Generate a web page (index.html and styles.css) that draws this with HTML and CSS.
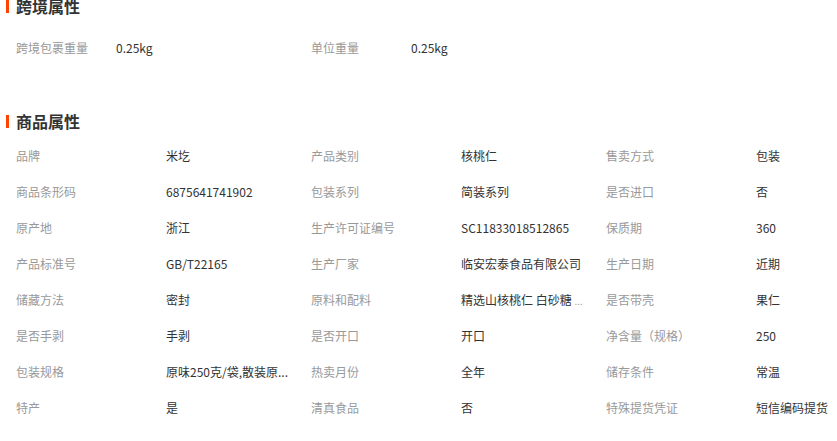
FILE: index.html
```html
<!DOCTYPE html>
<html lang="zh-CN">
<head>
  <meta charset="UTF-8" />
  <title>商品属性</title>
  <link rel="stylesheet" href="styles.css">
</head>
<body>
  <div class="section cross">
    <h3 class="title"><span class="bar"></span>跨境属性</h3>
    <ul class="attrs attrs-short">
      <li><span class="label">跨境包裹重量</span><span class="value">0.25kg</span></li>
      <li><span class="label">单位重量</span><span class="value">0.25kg</span></li>
    </ul>
  </div>

  <div class="section goods">
    <h3 class="title"><span class="bar"></span>商品属性</h3>
    <ul class="attrs">
      <li><span class="label">品牌</span><span class="value">米圪</span></li>
      <li><span class="label">产品类别</span><span class="value">核桃仁</span></li>
      <li><span class="label">售卖方式</span><span class="value">包装</span></li>
      <li><span class="label">商品条形码</span><span class="value">6875641741902</span></li>
      <li><span class="label">包装系列</span><span class="value">简装系列</span></li>
      <li><span class="label">是否进口</span><span class="value">否</span></li>
      <li><span class="label">原产地</span><span class="value">浙江</span></li>
      <li><span class="label">生产许可证编号</span><span class="value">SC11833018512865</span></li>
      <li><span class="label">保质期</span><span class="value">360</span></li>
      <li><span class="label">产品标准号</span><span class="value">GB/T22165</span></li>
      <li><span class="label">生产厂家</span><span class="value">临安宏泰食品有限公司</span></li>
      <li><span class="label">生产日期</span><span class="value">近期</span></li>
      <li><span class="label">储藏方法</span><span class="value">密封</span></li>
      <li><span class="label">原料和配料</span><span class="value">精选山核桃仁 白砂糖 <span class="more">...</span></span></li>
      <li><span class="label">是否带壳</span><span class="value">果仁</span></li>
      <li><span class="label">是否手剥</span><span class="value">手剥</span></li>
      <li><span class="label">是否开口</span><span class="value">开口</span></li>
      <li><span class="label">净含量（规格）</span><span class="value">250</span></li>
      <li><span class="label">包装规格</span><span class="value">原味250克/袋,散装原...</span></li>
      <li><span class="label">热卖月份</span><span class="value">全年</span></li>
      <li><span class="label">储存条件</span><span class="value">常温</span></li>
      <li><span class="label">特产</span><span class="value">是</span></li>
      <li><span class="label">清真食品</span><span class="value">否</span></li>
      <li><span class="label">特殊提货凭证</span><span class="value">短信编码提货</span></li>
    </ul>
  </div>
</body>
</html>
```

FILE: styles.css
```css
body {
  margin: 0;
  padding: 0;
  background: #fff;
  font-family: "Noto Sans CJK SC", "Liberation Sans", sans-serif;
  font-size: 12px;
  color: #333;
  overflow: hidden;
}
.section {
  width: 837px;
}
.cross {
  margin-top: -4px;
}
.goods {
  margin-top: 45px;
}
.title {
  display: flex;
  align-items: center;
  gap: 7px;
  margin: 0 0 0 6px;
  height: 20px;
  line-height: 20px;
  font-size: 16px;
  font-weight: bold;
  color: #333;
}
.bar {
  width: 3px;
  height: 13px;
  background: #ff4400;
}
.attrs {
  list-style: none;
  margin: 0;
  padding: 0 0 0 16px;
  display: grid;
  grid-template-columns: 295px 295px 1fr;
}
.attrs-short {
  margin-top: 14px;
}
.goods .attrs {
  margin-top: 7px;
}
.attrs li {
  display: flex;
  height: 36px;
  line-height: 36px;
  white-space: nowrap;
}
.label {
  width: 150px;
  flex-shrink: 0;
  color: #999;
}
.attrs-short .label {
  width: 100px;
}
.value {
  color: #333;
}
.more {
  color: #999;
  font-size: 10px;
}
```
